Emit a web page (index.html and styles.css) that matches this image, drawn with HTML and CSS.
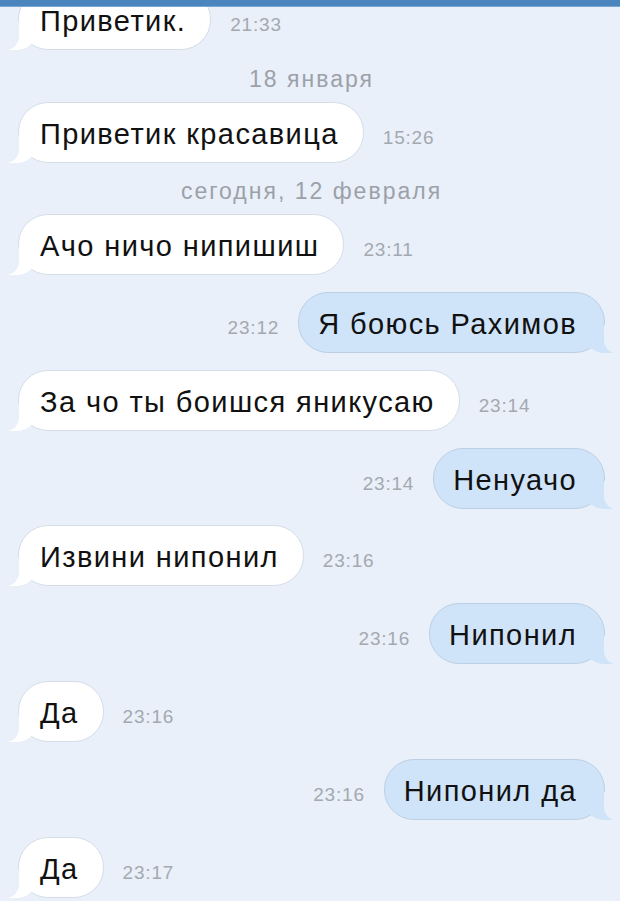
FILE: index.html
```html
<!DOCTYPE html>
<html lang="ru">
<head>
<meta charset="UTF-8">
<meta name="viewport" content="width=device-width, initial-scale=1.0">
<title>Сообщения</title>
<link rel="stylesheet" href="styles.css">
</head>
<body>
    <div class="topbar"></div>

    <div class="chat">
        <div class="row in">
            <div class="bubble">Приветик.</div>
            <span class="time">21:33</span>
        </div>

        <div class="date">18 января</div>

        <div class="row in">
            <div class="bubble">Приветик красавица</div>
            <span class="time">15:26</span>
        </div>

        <div class="date">сегодня, 12 февраля</div>

        <div class="row in">
            <div class="bubble">Ачо ничо нипишиш</div>
            <span class="time">23:11</span>
        </div>
        <div class="row out">
            <span class="time">23:12</span>
            <div class="bubble">Я боюсь Рахимов</div>
        </div>
        <div class="row in">
            <div class="bubble">За чо ты боишся яникусаю</div>
            <span class="time">23:14</span>
        </div>
        <div class="row out">
            <span class="time">23:14</span>
            <div class="bubble">Ненуачо</div>
        </div>
        <div class="row in">
            <div class="bubble">Извини нипонил</div>
            <span class="time">23:16</span>
        </div>
        <div class="row out">
            <span class="time">23:16</span>
            <div class="bubble">Нипонил</div>
        </div>
        <div class="row in">
            <div class="bubble">Да</div>
            <span class="time">23:16</span>
        </div>
        <div class="row out">
            <span class="time">23:16</span>
            <div class="bubble">Нипонил да</div>
        </div>
        <div class="row in">
            <div class="bubble">Да</div>
            <span class="time">23:17</span>
        </div>
    </div>
</body>
</html>
```

FILE: styles.css
```css
html, body {
    margin: 0;
    padding: 0;
    background: #e9f0f9;
    height: 100%;
    overflow: hidden;
}
body {
    font-family: "Liberation Sans", Arial, sans-serif;
    color: #111;
}
.topbar {
    position: fixed;
    top: 0;
    left: 0;
    right: 0;
    height: 6px;
    background: #4a85bd;
    border-bottom: 1px solid #79a6d3;
    z-index: 5;
}
.chat {
    display: flex;
    flex-direction: column;
    gap: 16.8px;
    margin-top: -11px;
    padding: 0 15px 0 18px;
}
.row {
    display: flex;
    align-items: baseline;
    gap: 19px;
}
.row.out {
    justify-content: flex-end;
}
.bubble {
    position: relative;
    z-index: 0;
    font-size: 29px;
    letter-spacing: 1.4px;
    line-height: 33px;
    padding: 15px 24px 11px 21px;
    background: #fff;
    border: 1px solid #d5dde8;
    border-radius: 30px;
    white-space: nowrap;
}
.out .bubble {
    background: #cfe3f9;
    border-color: #bccfe5;
    padding: 15px 27px 11px 19px;
}
/* tail */
.bubble::before,
.bubble::after {
    content: "";
    position: absolute;
    z-index: -1;
    bottom: -1px;
}
.in .bubble::before {
    left: -11px;
    width: 28px;
    height: 26px;
    background: #fff;
    border-bottom-right-radius: 20px 16px;
}
.in .bubble::after {
    left: -14px;
    width: 14px;
    height: 28px;
    background: #e9f0f9;
    border-bottom-right-radius: 13px 14px;
}
.out .bubble::before {
    right: -9px;
    width: 28px;
    height: 26px;
    background: #cfe3f9;
    border-bottom-left-radius: 20px 16px;
}
.out .bubble::after {
    right: -12px;
    width: 12px;
    height: 28px;
    background: #e9f0f9;
    border-bottom-left-radius: 13px 14px;
}
.time {
    font-size: 19px;
    letter-spacing: 0.8px;
    color: #a4a9b0;
}
.date {
    text-align: center;
    font-size: 23px;
    letter-spacing: 2px;
    line-height: 18px;
    color: #9ca1a9;
    padding-top: 3px;
    margin-bottom: -3px;
}
```
